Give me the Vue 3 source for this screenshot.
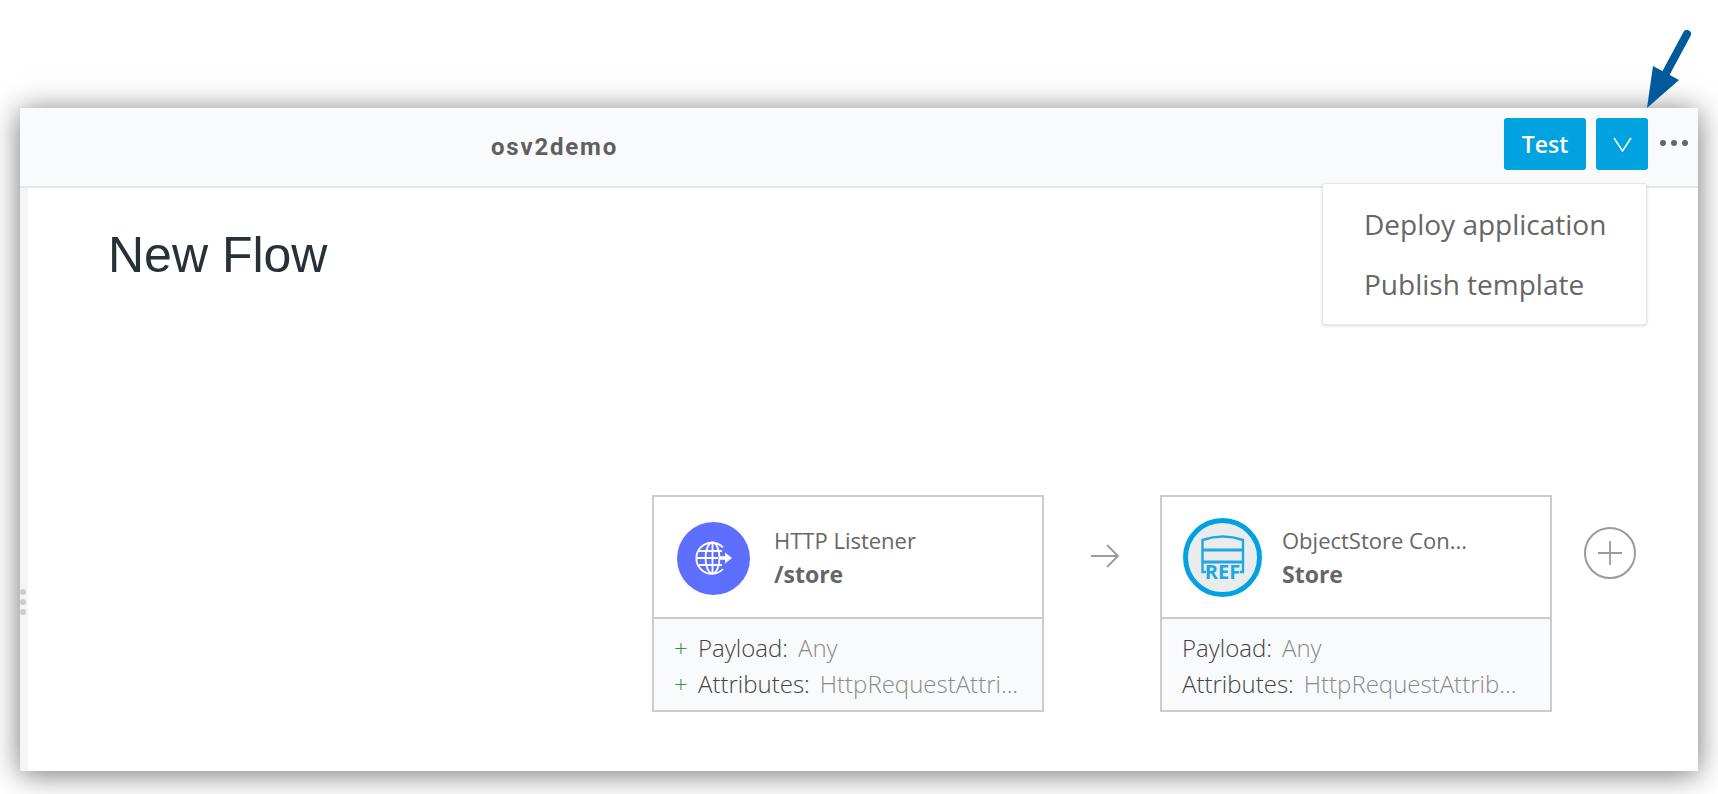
<template>
  <div class="page">
    <svg class="pointer" width="60" height="86" viewBox="0 0 60 86">
      <path d="M45 9 L24 48" stroke="#005a9c" stroke-width="8" stroke-linecap="round" fill="none" />
      <path d="M5 83 L11 41 L37 55 Z" fill="#005a9c" />
    </svg>

    <div class="window">
      <header class="topbar">
        <span class="app-name">osv2demo</span>
        <div class="actions">
          <button class="btn btn-test">Test</button>
          <button class="btn btn-arrow">
            <svg width="19" height="15" viewBox="0 0 19 15">
              <path d="M1 1 L9.5 14 L18 1" stroke="#fff" stroke-width="1.5" fill="none" />
            </svg>
          </button>
          <div class="more">
            <i></i><i></i><i></i>
          </div>
        </div>
        <div class="menu">
          <div class="menu-item">Deploy application</div>
          <div class="menu-item">Publish template</div>
        </div>
      </header>

      <main class="canvas">
        <div class="grip"><i></i><i></i><i></i></div>
        <h1>New Flow</h1>

        <div class="flow">
          <div class="card">
            <div class="card-head">
              <div class="icon-http">
                <svg width="40" height="40" viewBox="0 0 40 40" fill="none" stroke="#fff" stroke-width="1.8">
                  <path d="M29 9.5 A15.5 15.5 0 1 0 29 31" />
                  <ellipse cx="18.5" cy="20" rx="7" ry="15.5" />
                  <path d="M18.5 4.5 V35.5 M5 13 H28 M5 27 H28 M3 20 H24" />
                  <path d="M26 18.2 H31 V14.5 L38 20 L31 25.5 V21.8 H26 Z" fill="#fff" stroke="none" />
                </svg>
              </div>
              <div class="card-title">
                <div class="kind">HTTP Listener</div>
                <div class="name">/store</div>
              </div>
            </div>
            <div class="card-meta">
              <div class="meta-row"><span class="plus">+</span><span class="key">Payload:</span><span class="val">Any</span></div>
              <div class="meta-row"><span class="plus">+</span><span class="key">Attributes:</span><span class="val">HttpRequestAttri...</span></div>
            </div>
          </div>

          <div class="link">
            <svg width="30" height="26" viewBox="0 0 30 26" fill="none" stroke="#9b9b9b" stroke-width="1.8">
              <path d="M1 13 H27 M17 2 L28 13 L17 24" />
            </svg>
          </div>

          <div class="card">
            <div class="card-head card-head-ref">
              <div class="icon-ref">
                <svg width="79" height="79" viewBox="0 0 79 79" fill="none" stroke="#1fa8e0" stroke-width="2.4">
                  <path d="M23 54 H19.5 V22 Q40 15 60 22 V54 H57" />
                  <path d="M19.5 32 H60 M19.5 44 H60" stroke-width="3" />
                  <text x="39.5" y="61" text-anchor="middle" class="ref-text">REF</text>
                </svg>
              </div>
              <div class="card-title">
                <div class="kind">ObjectStore Con...</div>
                <div class="name">Store</div>
              </div>
            </div>
            <div class="card-meta">
              <div class="meta-row"><span class="key">Payload:</span><span class="val">Any</span></div>
              <div class="meta-row"><span class="key">Attributes:</span><span class="val">HttpRequestAttrib...</span></div>
            </div>
          </div>

          <div class="add">
            <svg width="26" height="26" viewBox="0 0 26 26" stroke="#9b9b9b" stroke-width="1.8">
              <path d="M13 1 V25 M1 13 H25" />
            </svg>
          </div>
        </div>
      </main>
    </div>
  </div>
</template>

<script setup>
</script>

<style>
html,
body {
  margin: 0;
  background: #fff;
}
</style>

<style scoped>
.page {
  position: relative;
  width: 1718px;
  height: 794px;
  padding: 108px 20px 0;
  box-sizing: border-box;
  overflow: hidden;
  font-family: "Open Sans", sans-serif;
  color: #666;
}

.pointer {
  position: absolute;
  left: 1642px;
  top: 25px;
  z-index: 2;
}

.window {
  height: 663px;
  background: #fff;
  box-shadow: 0 3px 28px rgba(0, 0, 0, 0.55);
  display: flex;
  flex-direction: column;
}

.topbar {
  position: relative;
  height: 80px;
  flex: none;
  box-sizing: border-box;
  background: #f9fafb;
  border-bottom: 2px solid #e6e7e9;
  display: flex;
  align-items: flex-start;
  justify-content: space-between;
  padding: 10px 10px 0 471px;
}

.app-name {
  margin-top: 15px;
  font-family: Roboto, sans-serif;
  font-size: 24px;
  font-weight: 700;
  letter-spacing: 1.8px;
  color: #5f5f5f;
}

.actions {
  display: flex;
  align-items: center;
  gap: 10px;
}

.btn {
  height: 52px;
  border: none;
  border-radius: 3px;
  background: #00a2e0;
  color: #fff;
  font-family: "Open Sans", sans-serif;
  font-size: 23px;
  font-weight: 600;
  padding: 0;
  display: flex;
  align-items: center;
  justify-content: center;
}

.btn-test {
  width: 82px;
}

.btn-arrow {
  width: 52px;
}

.more {
  display: flex;
  gap: 5px;
  margin-left: 2px;
  margin-top: -2px;
}

.more i {
  width: 6px;
  height: 6px;
  border-radius: 50%;
  background: #666;
}

.menu {
  position: absolute;
  top: 75px;
  right: 51px;
  width: 325px;
  height: 142px;
  box-sizing: border-box;
  background: #fff;
  border: 1px solid #e6e7e9;
  border-radius: 3px;
  box-shadow: 0 1px 3px rgba(0, 0, 0, 0.15);
  padding: 10px 0 0 41px;
  z-index: 1;
}

.menu-item {
  font-size: 28px;
  line-height: 60px;
  color: #666;
}

.canvas {
  position: relative;
  flex: 1;
  border-left: 8px solid #f4f5f7;
  padding-left: 80px;
}

.grip {
  position: absolute;
  left: -8px;
  top: 401px;
  display: flex;
  flex-direction: column;
  gap: 4px;
}

.grip i {
  width: 6px;
  height: 6px;
  border-radius: 50%;
  background: #ccc;
}

h1 {
  margin: 0;
  padding-top: 39px;
  font-family: "Liberation Sans", Arial, sans-serif;
  font-size: 50px;
  font-weight: 400;
  line-height: 56px;
  color: #263238;
}

.flow {
  position: absolute;
  left: 624px;
  top: 307px;
  display: flex;
  align-items: flex-start;
  width: 1100px;
}

.card {
  width: 392px;
  height: 217px;
  flex: none;
  box-sizing: border-box;
  border: 2px solid #ccc;
  background: #fff;
  display: flex;
  flex-direction: column;
}

.card-head {
  height: 120px;
  flex: none;
  box-sizing: border-box;
  display: flex;
  align-items: center;
  padding-left: 23px;
  gap: 24px;
}

.card-head-ref {
  padding-left: 21px;
  gap: 20px;
}

.icon-http {
  width: 73px;
  height: 73px;
  margin-top: 2px;
  border-radius: 50%;
  background: #5e6fff;
  display: flex;
  align-items: center;
  justify-content: center;
}

.icon-ref {
  width: 79px;
  height: 79px;
  flex: none;
  box-sizing: border-box;
  border-radius: 50%;
  border: 5px solid #00a2e0;
  background: #e9ebed;
  display: flex;
  align-items: center;
  justify-content: center;
}

.icon-ref svg {
  flex: none;
}

.ref-text {
  font-family: "Open Sans", sans-serif;
  font-size: 20px;
  font-weight: 700;
  fill: #1fa8e0;
  stroke: none;
}

.card-title {
  display: flex;
  flex-direction: column;
  gap: 4px;
}

.kind {
  font-size: 22px;
  line-height: 30px;
  color: #666;
}

.name {
  font-size: 23px;
  line-height: 30px;
  font-weight: 700;
  color: #666;
}

.card-meta {
  flex: 1;
  border-top: 2px solid #ccc;
  background: #f9fafb;
  padding: 10px 0 0 20px;
}

.meta-row {
  display: flex;
  height: 36px;
  align-items: center;
  font-size: 24px;
  font-weight: 300;
  white-space: nowrap;
}

.plus {
  width: 24px;
  color: #2e9a3a;
}

.key {
  color: #444;
  margin-right: 10px;
}

.val {
  color: #8a8a8a;
}

.link {
  width: 116px;
  flex: none;
  padding-top: 48px;
  padding-left: 46px;
  box-sizing: border-box;
}

.add {
  width: 52px;
  height: 52px;
  box-sizing: border-box;
  margin: 32px 0 0 32px;
  border: 2px solid #9b9b9b;
  border-radius: 50%;
  display: flex;
  align-items: center;
  justify-content: center;
}
</style>
